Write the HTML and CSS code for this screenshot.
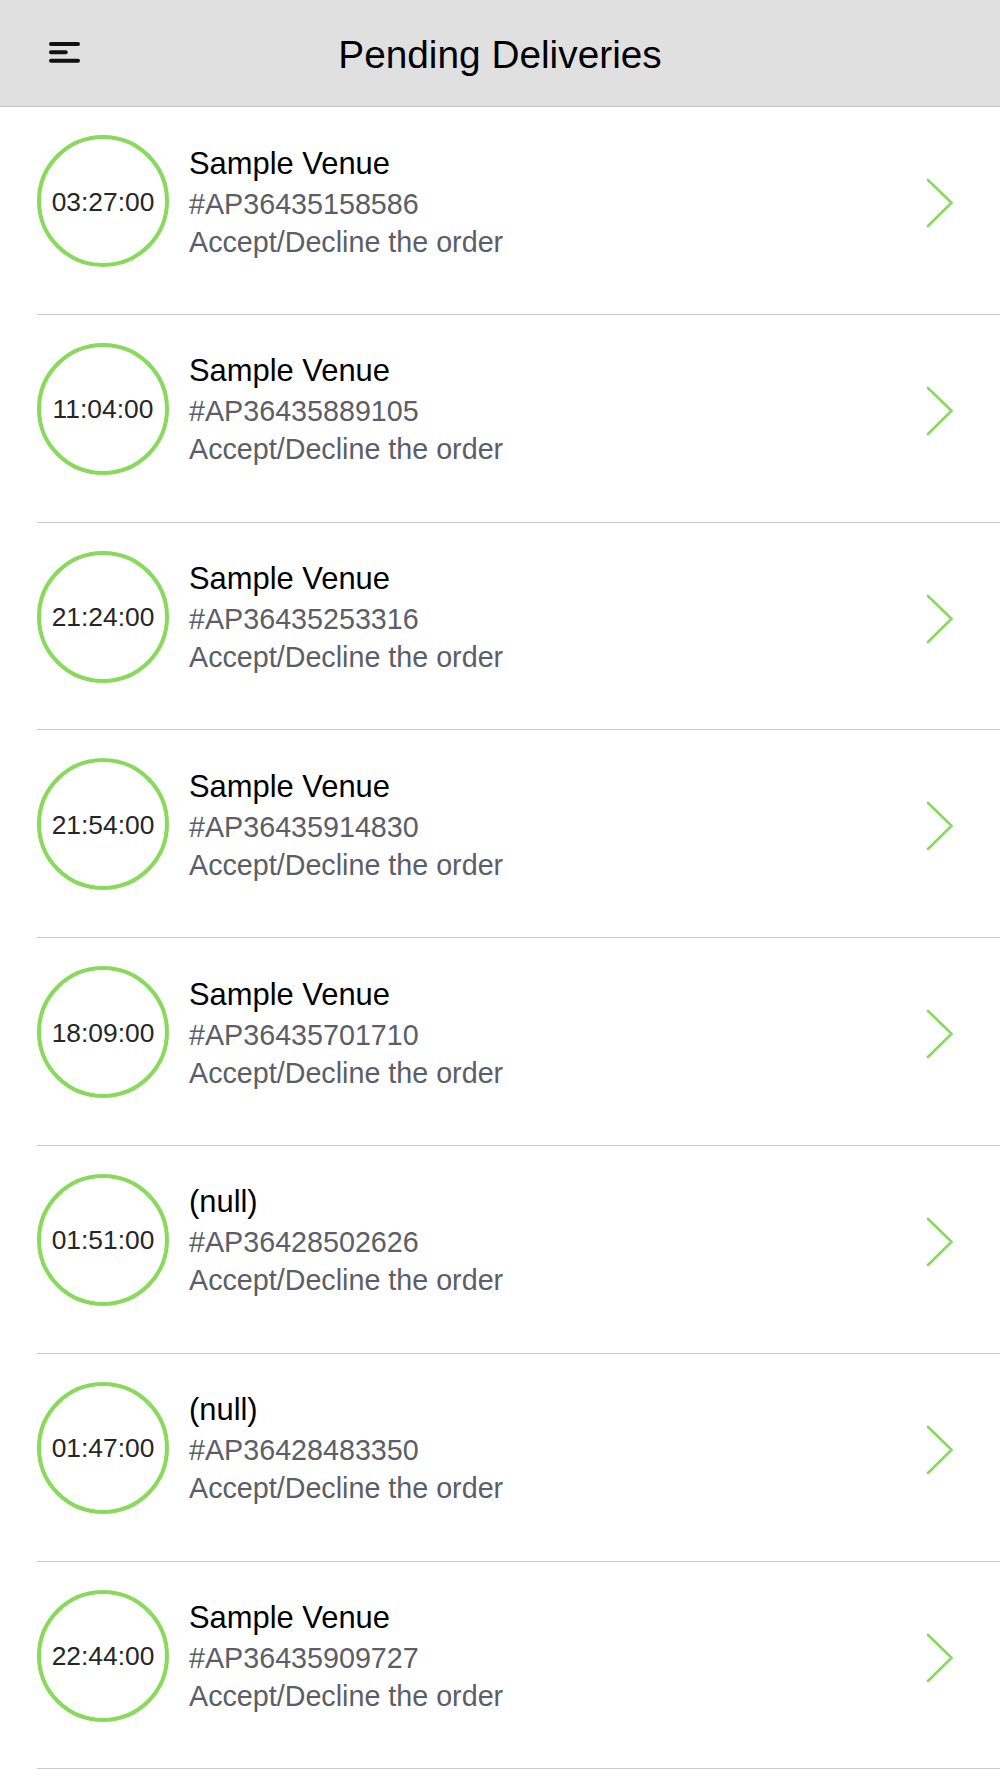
FILE: index.html
```html
<!DOCTYPE html>
<html lang="en">
<head>
<meta charset="utf-8">
<title>Pending Deliveries</title>
<link rel="stylesheet" href="styles.css">
</head>
<body>
<header class="topbar">
  <div class="menu">
    <svg class="menu-icon" width="32" height="24" viewBox="0 0 32 24">
      <line x1="2" y1="3" x2="29" y2="3"/>
      <line x1="2" y1="11.3" x2="16.7" y2="11.3"/>
      <line x1="2" y1="19.7" x2="29" y2="19.7"/>
    </svg>
  </div>
  <h1 class="title">Pending Deliveries</h1>
  <div class="spacer"></div>
</header>
<main class="list">
  <div class="row">
    <div class="timer">03:27:00</div>
    <div class="info">
      <div class="venue">Sample Venue</div>
      <div class="sub">#AP36435158586</div>
      <div class="sub">Accept/Decline the order</div>
    </div>
    <svg class="chev" width="30" height="50" viewBox="0 0 30 50"><polyline points="3,2 26.5,24.7 3,48"/></svg>
  </div>
  <div class="row">
    <div class="timer">11:04:00</div>
    <div class="info">
      <div class="venue">Sample Venue</div>
      <div class="sub">#AP36435889105</div>
      <div class="sub">Accept/Decline the order</div>
    </div>
    <svg class="chev" width="30" height="50" viewBox="0 0 30 50"><polyline points="3,2 26.5,24.7 3,48"/></svg>
  </div>
  <div class="row">
    <div class="timer">21:24:00</div>
    <div class="info">
      <div class="venue">Sample Venue</div>
      <div class="sub">#AP36435253316</div>
      <div class="sub">Accept/Decline the order</div>
    </div>
    <svg class="chev" width="30" height="50" viewBox="0 0 30 50"><polyline points="3,2 26.5,24.7 3,48"/></svg>
  </div>
  <div class="row">
    <div class="timer">21:54:00</div>
    <div class="info">
      <div class="venue">Sample Venue</div>
      <div class="sub">#AP36435914830</div>
      <div class="sub">Accept/Decline the order</div>
    </div>
    <svg class="chev" width="30" height="50" viewBox="0 0 30 50"><polyline points="3,2 26.5,24.7 3,48"/></svg>
  </div>
  <div class="row">
    <div class="timer">18:09:00</div>
    <div class="info">
      <div class="venue">Sample Venue</div>
      <div class="sub">#AP36435701710</div>
      <div class="sub">Accept/Decline the order</div>
    </div>
    <svg class="chev" width="30" height="50" viewBox="0 0 30 50"><polyline points="3,2 26.5,24.7 3,48"/></svg>
  </div>
  <div class="row">
    <div class="timer">01:51:00</div>
    <div class="info">
      <div class="venue">(null)</div>
      <div class="sub">#AP36428502626</div>
      <div class="sub">Accept/Decline the order</div>
    </div>
    <svg class="chev" width="30" height="50" viewBox="0 0 30 50"><polyline points="3,2 26.5,24.7 3,48"/></svg>
  </div>
  <div class="row">
    <div class="timer">01:47:00</div>
    <div class="info">
      <div class="venue">(null)</div>
      <div class="sub">#AP36428483350</div>
      <div class="sub">Accept/Decline the order</div>
    </div>
    <svg class="chev" width="30" height="50" viewBox="0 0 30 50"><polyline points="3,2 26.5,24.7 3,48"/></svg>
  </div>
  <div class="row">
    <div class="timer">22:44:00</div>
    <div class="info">
      <div class="venue">Sample Venue</div>
      <div class="sub">#AP36435909727</div>
      <div class="sub">Accept/Decline the order</div>
    </div>
    <svg class="chev" width="30" height="50" viewBox="0 0 30 50"><polyline points="3,2 26.5,24.7 3,48"/></svg>
  </div>
</main>
</body>
</html>
```
FILE: styles.css
```css
* { box-sizing: border-box; }
html, body {
  margin: 0;
  padding: 0;
  background: #ffffff;
  font-family: "Liberation Sans", Arial, Helvetica, sans-serif;
}
.topbar {
  height: 107px;
  background: #e0e0e0;
  border-bottom: 1px solid #c4c4c4;
  display: grid;
  grid-template-columns: 1fr auto 1fr;
  align-items: start;
}
.menu {
  padding-left: 49px;
  padding-top: 41px;
}
.menu-icon {
  display: block;
}
.menu-icon line {
  stroke: #111111;
  stroke-width: 4;
  stroke-linecap: round;
}
.title {
  margin: 0;
  padding-top: 4px;
  font-size: 38.8px;
  line-height: 102px;
  font-weight: normal;
  color: #000000;
  white-space: nowrap;
}
.list {
  display: flex;
  flex-direction: column;
}
.row {
  margin-left: 37px;
  height: 207.8px;
  padding-top: 28px;
  border-bottom: 1px solid #cbcbcb;
  display: flex;
  align-items: flex-start;
}
.timer {
  width: 132px;
  height: 132px;
  flex: none;
  border: 4px solid #88d95c;
  border-radius: 50%;
  display: flex;
  align-items: center;
  justify-content: center;
  font-size: 26.4px;
  color: #262626;
  padding-top: 2px;
}
.info {
  margin-left: 20px;
  margin-top: 9.5px;
  flex: 1;
}
.venue {
  font-size: 30.9px;
  line-height: 37.5px;
  margin-bottom: 2.5px;
  color: #000000;
}
.sub {
  font-size: 28.7px;
  line-height: 38px;
  color: #5b5e66;
}
.chev {
  flex: none;
  margin-top: 43px;
  margin-right: 45px;
}
.chev polyline {
  fill: none;
  stroke: #88d95c;
  stroke-width: 2.6;
  stroke-linecap: round;
  stroke-linejoin: miter;
}
```
